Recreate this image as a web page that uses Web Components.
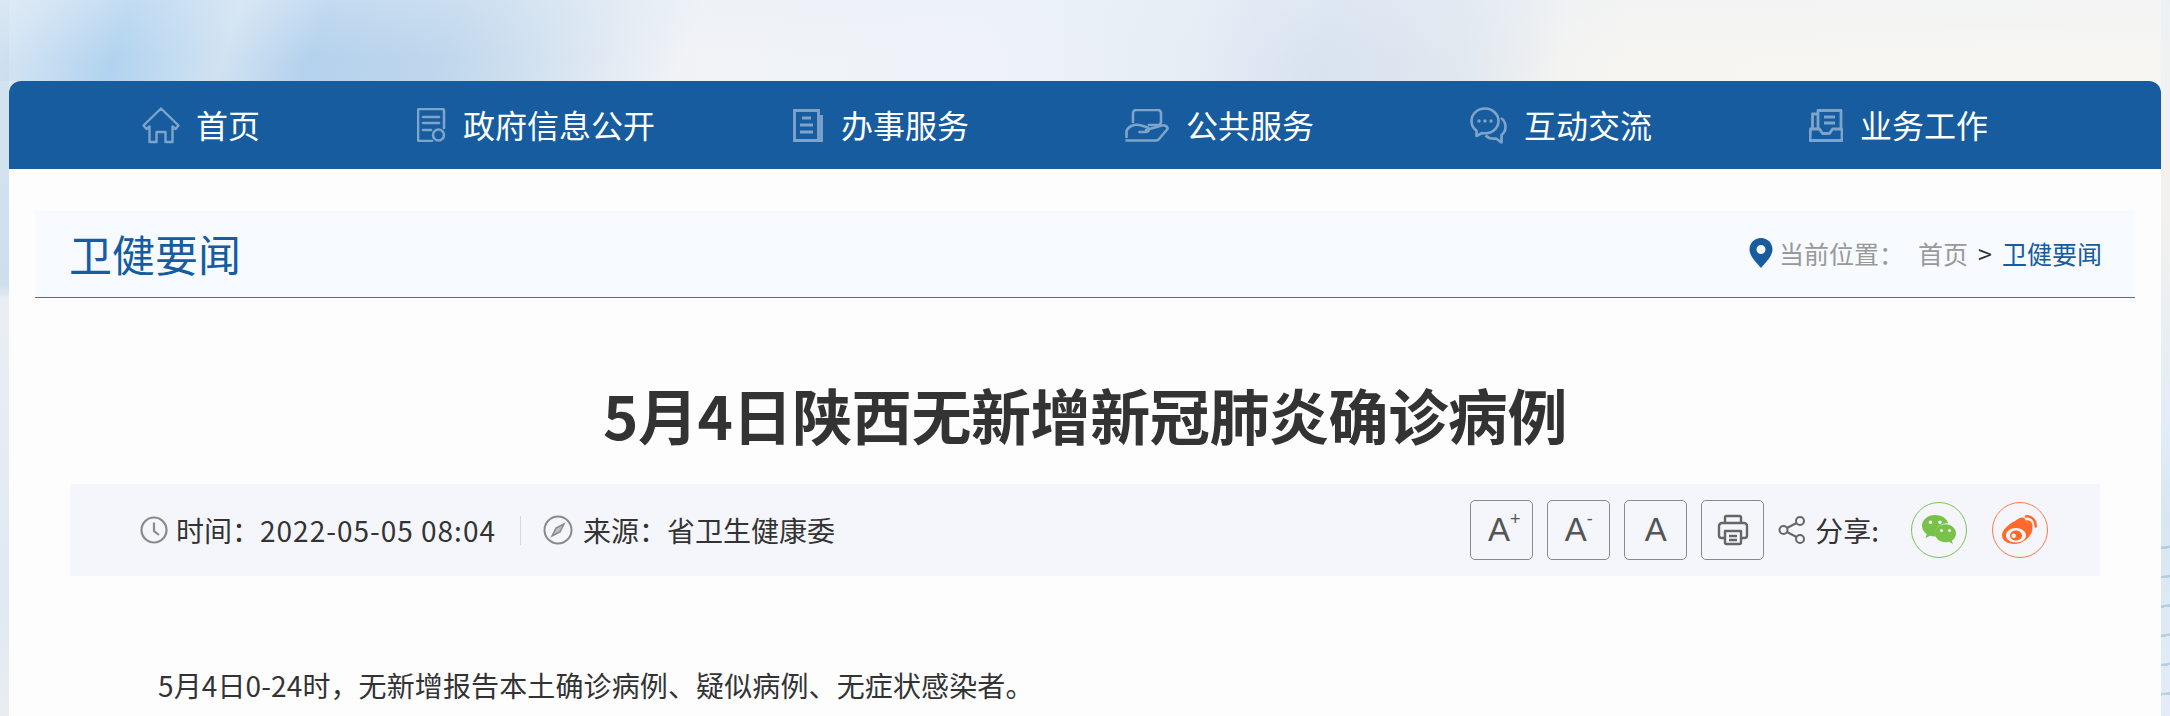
<!DOCTYPE html>
<html lang="zh-CN">
<head>
<meta charset="utf-8">
<title>5月4日陕西无新增新冠肺炎确诊病例</title>
<style>
  html, body { margin: 0; height: 716px; overflow: hidden; }
  body {
    font-family: "Noto Sans CJK SC", "Noto Sans", sans-serif;
    color: #333;
    background:
      linear-gradient(180deg, rgba(232,240,248,.3) 0, rgba(232,240,248,0) 60px) 0 0 / 100% 81px no-repeat,
      linear-gradient(108deg, transparent 0, rgba(172,208,238,.9) 6%, rgba(196,220,240,.6) 11%, rgba(174,206,236,.9) 15%, rgba(180,208,234,.8) 21%, transparent 32%) 0 0 / 100% 81px no-repeat,
      linear-gradient(96deg, transparent 55%, rgba(210,223,238,.7) 61%, rgba(216,226,238,.65) 67%, transparent 72%) 0 0 / 100% 81px no-repeat,
      linear-gradient(180deg, #d6e4f1 0, #cfdeed 285px, #e9eef4 300px, #e0e9f3 600px, #e8edf1 716px) 0 0 / 9px 716px no-repeat,
      repeating-linear-gradient(172deg, transparent 0, transparent 26px, rgba(140,170,200,.45) 27px, rgba(140,170,200,.45) 29px) 100% 520px / 9px 196px no-repeat,
      linear-gradient(180deg, #eef1f3 0, #f3f1ee 200px, #e3edf6 420px, #d8e6f3 520px, #e4edf5 716px) 100% 0 / 9px 716px no-repeat,
      linear-gradient(90deg, #dce9f5 0, #f1f3f6 28%, #eff3f9 45%, #e4ebf4 58%, #f6f5f1 75%, #f7f6f2 100%);
  }
</style>
</head>
<body>
<gov-page>
  <site-nav>
    <nav-item label="首页">
      <svg slot="icon" width="38" height="37" viewBox="0 0 38 37" fill="none" stroke="#7fa4ca" stroke-width="2.4" stroke-linejoin="round" stroke-linecap="round"><path d="M1.500 18.500 19 1.500l17.500 17-3 3.500-3-2.500V35H23.500V25h-9v10H7.500V19.500l-3 2.500z"/></svg>
    </nav-item>
    <nav-item label="政府信息公开">
      <svg slot="icon" width="29" height="34" viewBox="0 0 29 34" fill="none" stroke="#7fa4ca" stroke-width="2.6" stroke-linecap="round"><path d="M15 33H2.500a1.500 1.500 0 0 1-1.500-1.500V2.500A1.500 1.500 0 0 1 2.500 1h23A1.500 1.500 0 0 1 27 2.500V20"/><path d="M6 9h16M6 15h16M6 22h8"/><circle cx="21.500" cy="27" r="5.500"/></svg>
    </nav-item>
    <nav-item label="办事服务">
      <svg slot="icon" width="31" height="33" viewBox="0 0 31 33" fill="none" stroke="#7fa4ca" stroke-width="2.800"><path d="M1.500 1.500h24v30h-24z"/><path d="M28.500 6v25.500H24" /><path d="M9 9h9M7 16h13M7 23h13"/></svg>
    </nav-item>
    <nav-item label="公共服务">
      <svg slot="icon" width="44" height="33" viewBox="0 0 44 33" fill="none" stroke="#7fa4ca" stroke-width="2.600" stroke-linecap="round" stroke-linejoin="round"><path d="M8 13V4a3 3 0 0 1 3-3h22a3 3 0 0 1 3 3v9a3 3 0 0 1-3 3H24"/><path d="M1.500 28v-6c2-5 8-7 13-6l7 2c3 1 3 5-1 5h-6"/><path d="M21 21l14-4c5-2 8 1 7.500 3L34 30a4 4 0 0 1-3 1.500H1.500"/></svg>
    </nav-item>
    <nav-item label="互动交流">
      <svg slot="icon" width="37" height="37" viewBox="0 0 37 37" fill="none" stroke="#7fa4ca" stroke-width="2.600" stroke-linejoin="round"><path d="M15 1.500C7.500 1.500 1.500 7 1.500 14c0 4 2 7.500 5 9.500V29l5.500-3c1 .2 2 .3 3 .3 7.500 0 13.500-5.500 13.500-12.300S22.500 1.500 15 1.500z"/><path d="M31 11c3 2 4.500 5 4.500 9 0 3.500-1.500 6-4 8v7.500L26 31.500c-4 .5-8-.5-10.500-3"/><g fill="#7fa4ca" stroke="none"><circle cx="9" cy="14" r="1.700"/><circle cx="15" cy="14" r="1.700"/><circle cx="21" cy="14" r="1.700"/></g></svg>
    </nav-item>
    <nav-item label="业务工作">
      <svg slot="icon" width="34" height="33" viewBox="0 0 34 33" fill="none" stroke="#7fa4ca" stroke-width="2.800" stroke-linejoin="round"><path d="M9 20V1.500h23V20"/><path d="M9 5H3.500v15"/><path d="M15 8h11M15 14h11"/><path d="M1.500 20h9l3 4.500h7l3-4.500h9.500v11.500h-32z"/></svg>
    </nav-item>
  </site-nav>

  <section-head heading="卫健要闻">
    <bread-crumb></bread-crumb>
  </section-head>

  <article-view>
    <h1 slot="title">5月4日陕西无新增新冠肺炎确诊病例</h1>
    <article-meta slot="meta"></article-meta>
    <p>5月4日0-24时，无新增报告本土确诊病例、疑似病例、无症状感染者。</p>
  </article-view>
</gov-page>

<script>
class GovPage extends HTMLElement {
  constructor() {
    super();
    this.attachShadow({ mode: 'open' });
    this.shadowRoot.innerHTML = `
      <style>
        :host { display: block; padding: 81px 9px 0; height: 635px; overflow: hidden; }
        #card { background: #fdfdfe; border-radius: 12px 12px 0 0; height: 100%; }
      </style>
      <div id="card"><slot></slot></div>
    `;
  }
}

class SiteNav extends HTMLElement {
  constructor() {
    super();
    this.attachShadow({ mode: 'open' });
    this.shadowRoot.innerHTML = `
      <style>
        :host {
          display: grid;
          grid-template-columns: 275px 376px 332px 345px 339px auto;
          align-items: center;
          height: 88px;
          padding-left: 133px;
          background: #165c9f;
          border-radius: 12px 12px 0 0;
        }
      </style>
      <slot></slot>
    `;
  }
}

class NavItem extends HTMLElement {
  constructor() {
    super();
    this.attachShadow({ mode: 'open' });
    this.shadowRoot.innerHTML = `
      <style>
        :host { display: flex; align-items: center; gap: 17px; color: #fff; font-size: 32px; }
        :host([label="首页"]) { gap: 16px; }
        ::slotted(svg) { display: block; }
        span { margin-top: -2px; }
      </style>
      <slot name="icon"></slot>
      <span>${this.getAttribute('label')}</span>
    `;
  }
}

class SectionHead extends HTMLElement {
  constructor() {
    super();
    this.attachShadow({ mode: 'open' });
    this.shadowRoot.innerHTML = `
      <style>
        :host {
          display: flex;
          justify-content: space-between;
          align-items: center;
          height: 86px;
          margin: 42px 26px 0;
          padding: 0 33px 0 34px;
          background: #f7fbff;
          border-bottom: 1px solid #3a72c4;
        }
        h2 { margin: -2px 0 0; font-size: 43px; font-weight: 400; color: #165c9f; }
      </style>
      <h2>${this.getAttribute('heading')}</h2>
      <slot></slot>
    `;
  }
}

class BreadCrumb extends HTMLElement {
  constructor() {
    super();
    this.attachShadow({ mode: 'open' });
    this.shadowRoot.innerHTML = `
      <style>
        :host { display: flex; align-items: center; font-size: 25px; color: #999; margin-top: -2px; }
        svg { display: block; margin-right: 6px; }
        .home { margin-left: 14px; }
        .sep { margin: 0 10px; color: #333; }
        .cur { color: #165c9f; }
      </style>
      <svg width="24" height="30" viewBox="0 0 24 30"><path fill="#165c9f" fill-rule="evenodd" d="M12 0C5.400 0 .5 5 .5 11.300.5 18.500 8 25 12 30c4-5 11.500-11.500 11.500-18.700C23.500 5 18.600 0 12 0zm0 7a4.500 4.500 0 1 1 0 9 4.500 4.500 0 0 1 0-9z"/></svg>
      <span>当前位置：</span><span class="home">首页</span><span class="sep">&gt;</span><span class="cur">卫健要闻</span>
    `;
  }
}

class ArticleView extends HTMLElement {
  constructor() {
    super();
    this.attachShadow({ mode: 'open' });
    this.shadowRoot.innerHTML = `
      <style>
        :host { display: block; padding: 0 61px; }
        ::slotted(h1) {
          margin: 0;
          height: 186px;
          padding-top: 48px;
          box-sizing: border-box;
          line-height: 136px;
          font-size: 60px;
          font-weight: 700;
          letter-spacing: -.4px;
          text-align: center;
          color: #333;
        }
        #body { padding: 81px 0 0 32px; }
        ::slotted(p) { margin: 0; font-size: 28px; line-height: 56px; letter-spacing: .12px; text-indent: 2em; color: #333; }
      </style>
      <slot name="title"></slot>
      <slot name="meta"></slot>
      <div id="body"><slot></slot></div>
    `;
  }
}

class ToolButton extends HTMLElement {
  constructor() {
    super();
    this.attachShadow({ mode: 'open' });
    this.shadowRoot.innerHTML = `
      <style>
        :host {
          display: flex;
          align-items: center;
          justify-content: center;
          width: 61px;
          height: 58px;
          border: 1px solid #8a8a8a;
          border-radius: 5px;
          font-family: "Liberation Sans", sans-serif;
          font-size: 33px;
          color: #555;
        }
        :host([mark="+"]) span { padding-left: 5px; }
        sup { font-size: 18px; line-height: 0; position: relative; top: -4px; vertical-align: super; }
      </style>
      <span><slot></slot>${this.hasAttribute('mark') ? `<sup>${this.getAttribute('mark')}</sup>` : ''}</span>
    `;
  }
}

class ArticleMeta extends HTMLElement {
  constructor() {
    super();
    this.attachShadow({ mode: 'open' });
    this.shadowRoot.innerHTML = `
      <style>
        :host {
          display: flex;
          align-items: center;
          height: 92px;
          padding: 0 52px 0 70px;
          background: #f5f6fb;
          font-size: 28px;
          color: #333;
        }
        svg { display: block; flex: none; }
        .time { margin-left: 8px; }
        .date { letter-spacing: 1px; }
        .rule { width: 1px; height: 29px; margin: 0 22px 0 24px; background: #d8d8d8; }
        .from { margin-left: 10px; }
        .tools { display: flex; align-items: center; gap: 14px; margin: 0 0 1px auto; }
        .share-ic { margin-left: 14px; }
        .share { margin-left: 9px; }
        .circle { display: flex; align-items: center; justify-content: center; width: 54px; height: 54px; border-radius: 50%; }
        .wx { border: 1px solid #7cc353; margin: 0 25px 0 32px; }
        .wb { border: 1px solid #ff7a45; }
      </style>
      <svg width="28" height="28" viewBox="0 0 28 28" fill="none" stroke="#8a8a8a" stroke-width="2.200"><circle cx="14" cy="14" r="12.500"/><path d="M14 6.500V15l5 4"/></svg>
      <span class="time">时间：<span class="date">2022-05-05 08:04</span></span>
      <span class="rule"></span>
      <svg width="30" height="30" viewBox="0 0 30 30" fill="none" stroke="#8a8a8a" stroke-width="2"><circle cx="15" cy="15" r="13.500"/><path d="M21 9 13 13l-4 8 8-4z" fill="#bdbdbd" stroke-width="1.500"/></svg>
      <span class="from">来源：省卫生健康委</span>
      <div class="tools">
        <tool-button mark="+">A</tool-button>
        <tool-button mark="-">A</tool-button>
        <tool-button>A</tool-button>
        <tool-button><svg width="32" height="32" viewBox="0 0 32 32" fill="none" stroke="#666" stroke-width="2.400" stroke-linejoin="round"><path d="M8 9V3.500a1.500 1.500 0 0 1 1.500-1.500h13A1.500 1.500 0 0 1 24 3.500V9"/><path d="M8 24H4.500A2.500 2.500 0 0 1 2 21.500V12a3 3 0 0 1 3-3h22a3 3 0 0 1 3 3v9.500a2.500 2.500 0 0 1-2.500 2.500H24"/><path d="M8 17h16v11.500a1.500 1.500 0 0 1-1.500 1.500h-13A1.500 1.500 0 0 1 8 28.500z"/><path d="M12 22h8M12 26h8"/></svg></tool-button>
      </div>
      <svg class="share-ic" width="28" height="28" viewBox="0 0 28 28" fill="none" stroke="#666" stroke-width="2"><circle cx="5.500" cy="14" r="4"/><circle cx="22" cy="5" r="4"/><circle cx="22" cy="23" r="4"/><path d="M9 12 18.500 7M9 16l9.500 5"/></svg>
      <span class="share">分享:</span>
      <div class="circle wx">
        <svg width="34" height="30" viewBox="0 0 34 30"><path fill="#78c24a" d="M13 0C5.800 0 0 4.800 0 10.800c0 3.400 1.900 6.300 4.800 8.300L3.500 23l4.700-2.300c1.500.4 3.100.7 4.800.7h1c-.4-1-.6-2-.6-3.100 0-5.600 5.400-10 12-10h.8C24.800 3.500 19.400 0 13 0z"/><path fill="#78c24a" d="M34 18.300c0-5-4.800-9-10.500-9s-10.500 4-10.500 9 4.800 9 10.500 9c1.200 0 2.400-.2 3.500-.5l3.800 2.200-1-3.300c2.500-1.700 4.200-4.300 4.200-7.400z"/><path fill="#f5f6fb" d="M8.500 5.500a1.800 1.800 0 1 0 0 3.600 1.800 1.800 0 0 0 0-3.600zm9.500 0a1.800 1.800 0 1 0 0 3.600 1.800 1.800 0 0 0 0-3.600zM19.500 14a1.500 1.500 0 1 0 0 3 1.500 1.500 0 0 0 0-3zm8 0a1.500 1.500 0 1 0 0 3 1.500 1.500 0 0 0 0-3z"/></svg>
      </div>
      <div class="circle wb">
        <svg width="36" height="30" viewBox="0 0 36 30"><path fill="#ff6a2b" fill-rule="evenodd" d="M13 6C19 1 23 2 23.500 5c.2 1.200-.2 2 .5 2.400 4 .6 6.500 3 6.500 6.100C30.500 20 22 29 13 29 5 29 0 25.500 0 20 0 16 5 10 13 6zM14 13C8.500 13 4 16.300 4 20.500S8.500 27.500 14 27.500 24 24.700 24 20.500 19.500 13 14 13z"/><path fill="#ff6a2b" fill-rule="evenodd" d="M14 15.500c-3.400 0-6 2.200-6 5s2.600 5 6 5 6-2.200 6-5-2.600-5-6-5zm-2.300 3a2.200 2.200 0 1 1 0 4.400 2.200 2.200 0 0 1 0-4.400z"/><path d="M24 1.500c5-1 10 3.500 9.700 10M24.500 6.500c2.800-.4 5 1.800 4.700 4.500" fill="none" stroke="#ff6a2b" stroke-width="2.500" stroke-linecap="round"/></svg>
      </div>
    `;
  }
}

customElements.define('gov-page', GovPage);
customElements.define('site-nav', SiteNav);
customElements.define('nav-item', NavItem);
customElements.define('section-head', SectionHead);
customElements.define('bread-crumb', BreadCrumb);
customElements.define('article-view', ArticleView);
customElements.define('tool-button', ToolButton);
customElements.define('article-meta', ArticleMeta);
</script>
</body>
</html>
